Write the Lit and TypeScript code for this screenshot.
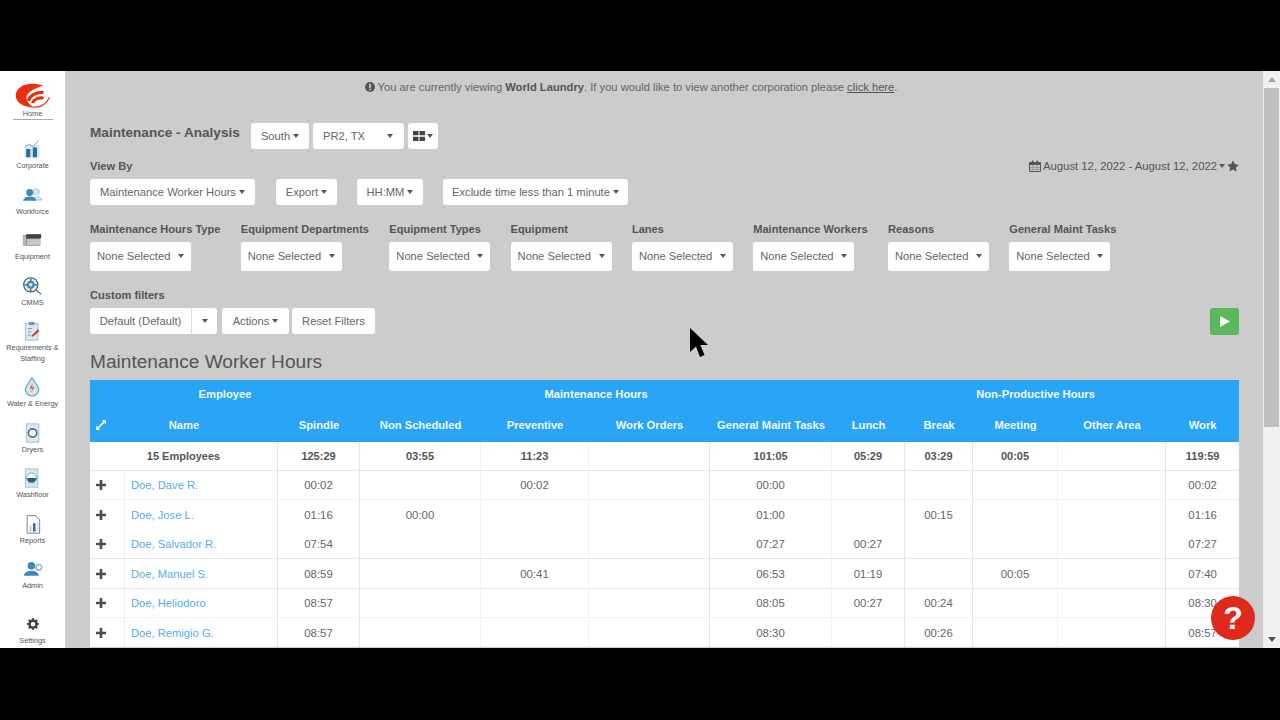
import { LitElement, html, css, svg } from "lit";
import { customElement } from "lit/decorators.js";

const caret = html`<i class="caret"></i>`;

const icons: Record<string, unknown> = {
  corporate: svg`<rect x="3" y="7" width="18" height="15" fill="#d5e8f2"/><rect x="5" y="12" width="5" height="10" fill="#2b6f9e"/><rect x="13" y="10" width="5" height="12" fill="#2b6f9e"/><path d="M4 9l5-3 4 3 7-7" fill="none" stroke="#7fa8bf" stroke-width="1.2"/>`,
  workforce: svg`<circle cx="16" cy="8" r="3.6" fill="#dbeaf3" stroke="#8fbcd6"/><path d="M9 18c1-5 13-5 14 0z" fill="#dbeaf3" stroke="#8fbcd6"/><circle cx="8" cy="9" r="4.2" fill="#3d88bd"/><path d="M0 19c1-7 15-7 16 0z" fill="#3d88bd"/>`,
  equipment: svg`<path d="M1 6h21v13H3z" fill="#8b8f93"/><rect x="5" y="5" width="18" height="5" fill="#3c4348"/><rect x="6" y="11" width="16" height="7" fill="#c3c7ca"/><rect x="1" y="7" width="4" height="12" fill="#b3b7ba"/>`,
  cmms: svg`<circle cx="10.5" cy="10.5" r="8.5" fill="#e6f0f6" stroke="#33566e" stroke-width="1.3"/><circle cx="10.5" cy="10.5" r="4.8" fill="#4a8db8"/><circle cx="10.5" cy="10.5" r="2" fill="#e6f0f6"/><path d="M10.5 3v3M10.5 15v3M3 10.5h3M15 10.5h3" stroke="#33566e" stroke-width="1.5"/><path d="M17 17l6 5" stroke="#33566e" stroke-width="1.4"/>`,
  req: svg`<rect x="4" y="3" width="15" height="20" fill="#d7eaf5" stroke="#8fb7cf"/><rect x="8" y="1" width="7" height="4" fill="#8c9296"/><path d="M7 9h5M7 13h4M7 17h3" stroke="#7a8f9c"/><path d="M11 18l8-8 2 2-8 7z" fill="#d8352a"/>`,
  water: svg`<path d="M12 1C8 7 4 11 4 15a8 8 0 0016 0c0-4-4-8-8-14z" fill="#cfe5f3" stroke="#5c9ac3" stroke-width="1.3"/><path d="M13 7l-4 7h3l-1 5 4-7h-3z" fill="#e8604f"/>`,
  dryers: svg`<rect x="4" y="1" width="15" height="22" fill="#d5e9f4" stroke="#9cb9ca"/><circle cx="11.5" cy="12" r="5" fill="#fff" stroke="#4d6f86" stroke-width="2"/>`,
  washfloor: svg`<rect x="4" y="1" width="15" height="22" fill="#d5e9f4" stroke="#9cb9ca"/><circle cx="11.5" cy="12" r="6" fill="#fff" stroke="#6e93aa"/><path d="M6 12h11a5.5 5.5 0 01-11 0z" fill="#1f5f88"/>`,
  reports: svg`<path d="M5 2h10l5 5v16H5z" fill="#fff" stroke="#6f8797" stroke-width="1.2"/><rect x="12" y="11" width="3" height="10" fill="#2b6f9e"/><rect x="8" y="14" width="2" height="7" fill="#9cc4dc"/><rect x="17" y="9" width="1.6" height="12" fill="#cfe3ef"/>`,
  admin: svg`<circle cx="10" cy="8" r="4.5" fill="#3d88bd"/><path d="M1 20c1-8 17-8 18 0z" fill="#3d88bd"/><circle cx="19" cy="10" r="3.4" fill="#fff" stroke="#8fbcd6" stroke-width="2"/>`,
  settings: svg`<path fill-rule="evenodd" d="M10.3 2h3.4l.5 2.6 1.5.7 2.2-1.5 2.4 2.4-1.5 2.2.7 1.5 2.5.5v3.4l-2.5.5-.7 1.5 1.5 2.2-2.4 2.4-2.2-1.5-1.5.7-.5 2.4h-3.4l-.5-2.4-1.5-.7-2.2 1.5-2.4-2.4 1.5-2.2-.7-1.5-2.5-.5v-3.4l2.5-.5.7-1.5-1.5-2.2 2.4-2.4 2.2 1.5 1.5-.7zM12 8.6a3.9 3.9 0 100 7.8 3.9 3.9 0 000-7.8z" fill="#3f4346"/>`,
};

const navItems: [string, string[]][] = [
  ["corporate", ["Corporate"]],
  ["workforce", ["Workforce"]],
  ["equipment", ["Equipment"]],
  ["cmms", ["CMMS"]],
  ["req", ["Requirements &", "Staffing"]],
  ["water", ["Water & Energy"]],
  ["dryers", ["Dryers"]],
  ["washfloor", ["Washfloor"]],
  ["reports", ["Reports"]],
  ["admin", ["Admin"]],
];

const filters = [
  "Maintenance Hours Type",
  "Equipment Departments",
  "Equipment Types",
  "Equipment",
  "Lanes",
  "Maintenance Workers",
  "Reasons",
  "General Maint Tasks",
];

const colWidths = [35, 153, 82, 121, 108, 121, 122, 73, 68, 85, 108, 73];
const after = ["v-hard", "v-soft", "v-soft", "v-hard", "v-soft", "v-hard", "v-hard", "v-soft", "v-hard", ""];

const totals = ["125:29", "03:55", "11:23", "", "101:05", "05:29", "03:29", "00:05", "", "119:59"];
const rows: { name: string; v: string[]; line: string }[] = [
  { name: "Doe, Dave R.", v: ["00:02", "", "00:02", "", "00:00", "", "", "", "", "00:02"], line: "soft" },
  { name: "Doe, Jose L.", v: ["01:16", "00:00", "", "", "01:00", "", "00:15", "", "", "01:16"], line: "none" },
  { name: "Doe, Salvador R.", v: ["07:54", "", "", "", "07:27", "00:27", "", "", "", "07:27"], line: "hard" },
  { name: "Doe, Manuel S.", v: ["08:59", "", "00:41", "", "06:53", "01:19", "", "00:05", "", "07:40"], line: "hard" },
  { name: "Doe, Heliodoro", v: ["08:57", "", "", "", "08:05", "00:27", "00:24", "", "", "08:30"], line: "soft" },
  { name: "Doe, Remigio G.", v: ["08:57", "", "", "", "08:30", "", "00:26", "", "", "08:57"], line: "none" },
];

@customElement("app-root")
export class AppRoot extends LitElement {
  static styles = css`
    :host { display: block; width: 1280px; height: 720px; background: #000; font-family: "Liberation Sans", Arial, sans-serif; color: #555; position: relative; overflow: hidden; }
    .screen { display: flex; flex-direction: column; height: 720px; }
    .band-top { height: 71px; flex: none; }
    .band-bottom { height: 72px; flex: none; }
    .app { flex: none; height: 577px; display: flex; background: #cbcccb; overflow: hidden; }

    .side { width: 65px; flex: none; background: #fff; display: flex; flex-direction: column; align-items: center; padding-top: 12px; box-sizing: border-box; font-size: 7.3px; color: #50555a; }
    .home { width: 40px; display: flex; flex-direction: column; align-items: center; border-bottom: 1px solid #aaa; height: 37px; box-sizing: border-box; margin-bottom: 17px; }
    .home svg { display: block; width: 36px; height: 26px; }
    .home span { line-height: 10px; }
    .nav { display: flex; flex-direction: column; gap: 11px; align-items: center; flex: 1; width: 100%; }
    .item { display: flex; flex-direction: column; align-items: center; text-align: center; line-height: 10.5px; white-space: nowrap; }
    .item svg { width: 20px; height: 24px; display: block; }
    .settings { margin-top: auto; padding-bottom: 2px; }
    .settings svg { width: 14px; }

    .main { flex: 1; min-width: 0; padding: 0 24px 0 25px; overflow: hidden; }
    .msg { font-size: 11.2px; line-height: 16px; padding: 8px 67px 0 0; color: #666; display: flex; justify-content: center; align-items: center; gap: 3px; white-space: pre; }
    .msg b { color: #555; }
    .msg u { color: #555; }
    .msg svg { width: 10px; height: 10px; }

    .btn { background: #fff; border-radius: 3px; font-size: 11.2px; color: #666; display: inline-flex; align-items: center; justify-content: center; gap: 3px; height: 26px; box-sizing: border-box; padding: 0 10px 1px; white-space: nowrap; flex: none; }
    .caret { display: inline-block; width: 0; height: 0; border-left: 3.5px solid transparent; border-right: 3.5px solid transparent; border-top: 4px solid #555; flex: none; }

    .row { display: flex; align-items: flex-start; }
    .title-row { margin-top: 28px; margin-bottom: 10px; gap: 4px; }
    .title { font-size: 13.6px; font-weight: bold; line-height: 20px; width: 153px; color: #555; flex: none; margin-right: 4px; }
    .w-south { width: 58px; }
    .w-pr2 { width: 91px; justify-content: space-between; padding-left: 10px; padding-right: 11px; }
    .w-grid { width: 30px; padding: 0; gap: 2px; }
    .w-grid svg { width: 12px; height: 10px; }

    .by-row { justify-content: space-between; height: 14px; margin-bottom: 6px; align-items: center; }
    .lbl { font-size: 11.1px; font-weight: bold; line-height: 14px; white-space: nowrap; color: #555; }
    .date { font-size: 11.3px; display: flex; align-items: center; gap: 2px; color: #555; }
    .date svg { width: 12px; height: 12px; }

    .view-row { gap: 20px; }
    .w-exp { width: 61px; margin-left: 1px; padding: 0; }
    .w-hh { width: 66px; padding: 0; }
    .w-ex { width: 185px; padding: 0; }
    .filters { display: flex; gap: 20.3px; margin-top: 17px; }
    .filter { display: flex; flex-direction: column; align-items: flex-start; gap: 6px; }
    .sel { width: 101px; height: 29px; justify-content: space-between; padding: 0 7px 1px; }

    .custom-lbl { margin-top: 17px; margin-bottom: 6px; }
    .custom { justify-content: space-between; }
    .btns { display: flex; gap: 3px; }
    .split { display: flex; margin-right: 2px; }
    .split .a { width: 102px; border-radius: 3px 0 0 3px; border-right: 1px solid #ddd; }
    .split .b { width: 25px; border-radius: 0 3px 3px 0; padding: 0; }
    .w-act { width: 67px; }
    .w-reset { width: 83px; }
    .go { width: 29px; height: 27px; background: #5cb85c; border-radius: 3px; display: flex; align-items: center; justify-content: center; }
    .go svg { width: 10px; height: 11px; }

    h3 { margin: 17px 0 8px; font-size: 19.1px; font-weight: normal; line-height: 20px; color: #555; }

    table { border-collapse: separate; border-spacing: 0; table-layout: fixed; width: 1149px; font-size: 11.4px; }
    th { background: #2aa5f5; color: #f2f8fd; font-weight: bold; height: 31px; box-sizing: border-box; padding: 0 0 4px; text-align: center; white-space: nowrap; position: relative; font-size: 11.2px; }
    .expand { position: absolute; left: 6px; top: 9px; width: 10px; height: 10px; }
    td { background: #fff; text-align: center; padding: 0; color: #666; height: 29px; box-sizing: border-box; white-space: nowrap; }
    .total td { font-weight: bold; font-size: 11px; color: #555; padding-bottom: 1px; border-bottom: 1.5px solid #e6e7ea; }
    td.v-soft { border-right: 1px solid #f1f1f3; }
    td.v-hard { border-right: 1.5px solid #e4e5e8; }
    tr.soft td { border-bottom: 1px solid #f3f3f5; }
    tr.hard td { height: 30px; padding-top: 1px; border-bottom: 1.5px solid #e6e7ea; }
    td.exp { border-right: 1px solid #eee; }
    td.exp svg { width: 10px; height: 10px; display: block; margin: 0 0 0 6px; }
    td.name { text-align: left; padding-left: 6px; color: #52aeea; font-size: 11.2px; }

    .cursor { position: absolute; left: 688px; top: 327px; width: 22px; height: 32px; pointer-events: none; }
    .help { position: absolute; left: 1211px; top: 596px; width: 44px; height: 44px; border-radius: 50%; background: #df2a1b; color: #fff; font-size: 32px; font-weight: bold; display: flex; align-items: center; justify-content: center; font-family: "Liberation Sans", Arial, sans-serif; }

    .scroll { width: 17px; flex: none; background: #f1f1f1; display: flex; flex-direction: column; align-items: center; }
    .arrow { height: 17px; flex: none; display: flex; align-items: center; justify-content: center; }
    .up { border-left: 4px solid transparent; border-right: 4px solid transparent; border-bottom: 5px solid #a3a3a3; }
    .down { border-left: 4px solid transparent; border-right: 4px solid transparent; border-top: 5px solid #505050; }
    .thumb { width: 15px; height: 339px; background: #bfbfbf; flex: none; }
    .fill { flex: 1; }
  `;

  private nav(key: string, lines: string[], cls = "") {
    return html`<div class="item ${cls}">
      <svg viewBox="0 0 24 24">${icons[key]}</svg>
      ${lines.map((l) => html`<span>${l}</span>`)}
    </div>`;
  }

  render() {
    return html`<div class="screen">
      <div class="band-top"></div>
      <div class="app">
        <aside class="side">
          <div class="home">
            <svg viewBox="0 0 36 26">
              <path d="M28 2.500C15-2 2 2 .8 11.500c-.8 7 7 13 18 13C13 21 10 16 12 12c3-4.500 9-7 16-9.500z" fill="#ea3010"/>
              <path d="M13.500 18c1-5 7-9 15-8.500M17.500 20c1-3 5-5.500 11-5" fill="none" stroke="#ea3010" stroke-width="3.200"/>
              <path d="M18 24c7 1 13-3 16.500-9.500" fill="none" stroke="#ea3010" stroke-width="1.200"/>
            </svg>
            <span>Home</span>
          </div>
          <nav class="nav">
            ${navItems.map(([k, l]) => this.nav(k, l))}
            ${this.nav("settings", ["Settings"], "settings")}
          </nav>
        </aside>

        <main class="main">
          <div class="msg"><svg viewBox="0 0 12 12"><circle cx="6" cy="6" r="6" fill="#555"/><rect x="5" y="2.2" width="2" height="5" fill="#cbcccb"/><rect x="5" y="8" width="2" height="2" fill="#cbcccb"/></svg><span>You are currently viewing <b>World Laundry</b>. If you would like to view another corporation please <u>click here</u>.</span></div>

          <div class="row title-row">
            <div class="title">Maintenance - Analysis</div>
            <span class="btn w-south">South ${caret}</span>
            <span class="btn w-pr2">PR2, TX ${caret}</span>
            <span class="btn w-grid"><svg viewBox="0 0 12 10"><path d="M0 0h5.500v4.300H0zM6.500 0H12v4.300H6.500zM0 5.700h5.500V10H0zM6.500 5.700H12V10H6.500z" fill="#444"/></svg>${caret}</span>
          </div>

          <div class="row by-row">
            <div class="lbl">View By</div>
            <div class="date">
              <svg viewBox="0 0 12 12"><path d="M.5 2.500h11v9H.5z" fill="none" stroke="#555"/><path d="M.5 2.500h11v2.500H.5zM3 .5h1.500v2H3zM7.500.5H9v2H7.500z" fill="#555"/><path d="M4 5v6M8 5v6M1 7.300h10M1 9.300h10" stroke="#777" stroke-width=".6"/></svg>
              <span>August 12, 2022 - August 12, 2022</span>${caret}
              <svg viewBox="0 0 12 12"><path d="M6 .4l1.800 3.700 4 .6-2.900 2.800.7 4L6 9.600l-3.600 1.900.7-4L.2 4.700l4-.6z" fill="#555"/></svg>
            </div>
          </div>

          <div class="row view-row">
            <span class="btn">Maintenance Worker Hours ${caret}</span>
            <span class="btn w-exp">Export ${caret}</span>
            <span class="btn w-hh">HH:MM ${caret}</span>
            <span class="btn w-ex">Exclude time less than 1 minute ${caret}</span>
          </div>

          <div class="filters">
            ${filters.map(
              (f) => html`<div class="filter"><div class="lbl">${f}</div><span class="btn sel">None Selected ${caret}</span></div>`
            )}
          </div>

          <div class="lbl custom-lbl">Custom filters</div>
          <div class="row custom">
            <div class="btns">
              <div class="split"><span class="btn a">Default (Default)</span><span class="btn b">${caret}</span></div>
              <span class="btn w-act">Actions ${caret}</span>
              <span class="btn w-reset">Reset Filters</span>
            </div>
            <div class="go"><svg viewBox="0 0 10 11"><path d="M0 0l10 5.500L0 11z" fill="#f4fbf4"/></svg></div>
          </div>

          <h3>Maintenance Worker Hours</h3>

          <table>
            <colgroup>${colWidths.map((w) => html`<col style="width:${w}px" />`)}</colgroup>
            <thead>
              <tr>
                <th colspan="3">Employee</th>
                <th colspan="4">Maintenance Hours</th>
                <th colspan="5">Non-Productive Hours</th>
              </tr>
              <tr>
                <th colspan="2">
                  <svg class="expand" viewBox="0 0 12 12"><path d="M7 0h5v5l-1.800-1.800L3.200 10.200 5 12H0V7l1.800 1.800 7-7z" fill="#f2f8fd"/></svg>
                  Name
                </th>
                ${["Spindle", "Non Scheduled", "Preventive", "Work Orders", "General Maint Tasks", "Lunch", "Break", "Meeting", "Other Area", "Work"].map(
                  (h) => html`<th>${h}</th>`
                )}
              </tr>
            </thead>
            <tbody>
              <tr class="total">
                <td colspan="2" class="v-hard">15 Employees</td>
                ${totals.map((t, i) => html`<td class=${after[i]}>${t}</td>`)}
              </tr>
              ${rows.map(
                (r) => html`<tr class=${r.line}>
                  <td class="exp"><svg viewBox="0 0 10 10"><path d="M3.700 0h2.600v3.700H10v2.600H6.300V10H3.700V6.300H0V3.700h3.700z" fill="#4d4d4d"/></svg></td>
                  <td class="name v-hard">${r.name}</td>
                  ${r.v.map((t, i) => html`<td class=${after[i]}>${t}</td>`)}
                </tr>`
              )}
            </tbody>
          </table>
        </main>

        <div class="scroll">
          <div class="arrow"><i class="up"></i></div>
          <div class="thumb"></div>
          <div class="fill"></div>
          <div class="arrow"><i class="down"></i></div>
        </div>
      </div>
      <div class="band-bottom"></div>

      <svg class="cursor" viewBox="0 0 22 32"><path d="M2 1v24l6-5.500 4 10.500 4.500-2-4.200-10H20z" fill="#000"/></svg>
      <div class="help">?</div>
    </div>`;
  }
}
